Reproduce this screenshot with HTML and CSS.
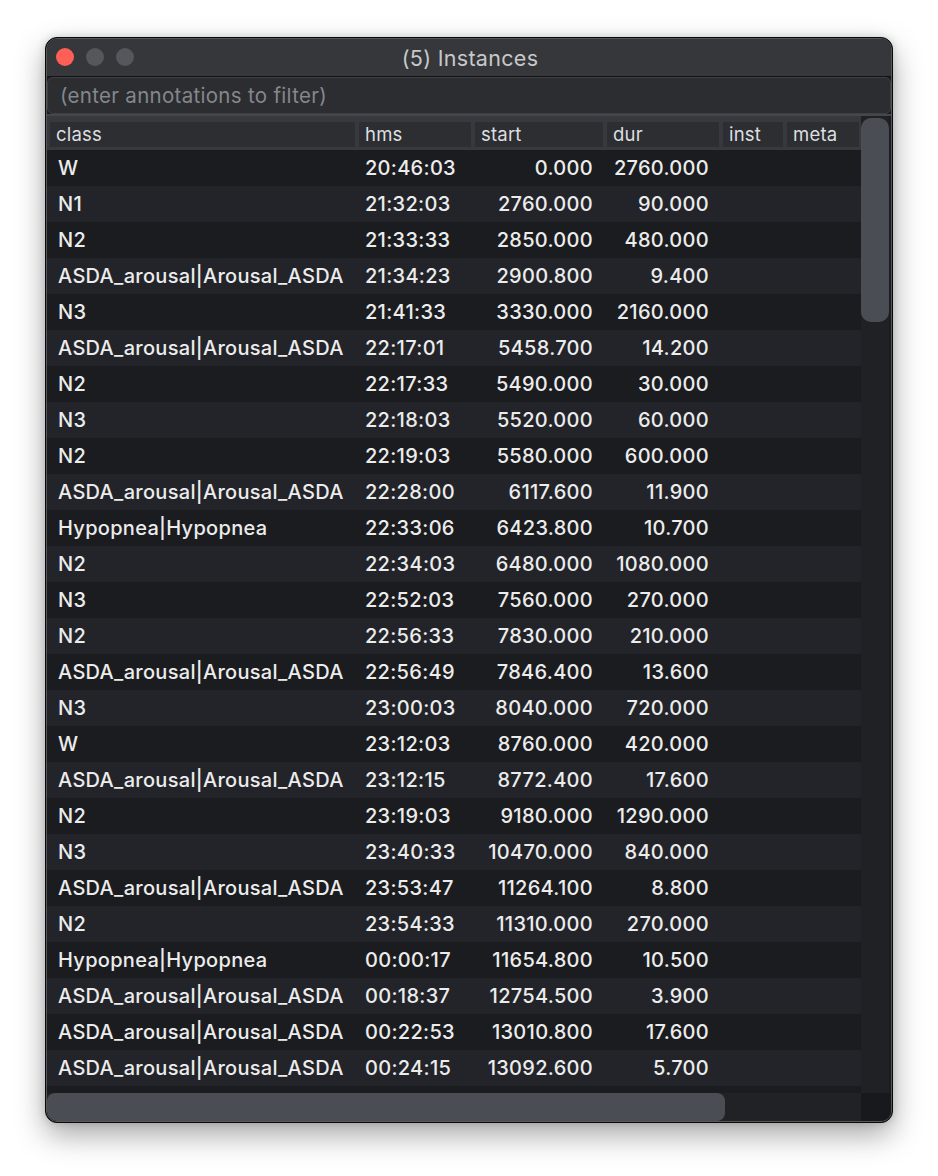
FILE: index.html
```html
<!DOCTYPE html>
<html>
<head>
<meta charset="utf-8">
<link rel="stylesheet" href="styles.css">
</head>
<body>
<div class="window">
  <div class="frame">
    <div class="titlebar">
      <div class="lights">
        <span class="light red"></span>
        <span class="light gray"></span>
        <span class="light gray"></span>
      </div>
      <div class="title">(5) Instances</div>
    </div>
    <div class="filter">(enter annotations to filter)</div>
    <div class="tablewrap">
      <div class="tablemain">
        <div class="header">
          <div class="hcell">class</div>
          <div class="hcell">hms</div>
          <div class="hcell">start</div>
          <div class="hcell">dur</div>
          <div class="hcell">inst</div>
          <div class="hcell">meta</div>
        </div>
        <div class="rows" id="rows"></div>
      </div>
      <div class="vscroll"><div class="vthumb"></div></div>
    </div>
    <div class="bottombar">
      <div class="hscroll"><div class="hthumb"></div></div>
      <div class="corner"></div>
    </div>
  </div>
</div>
<script src="app.js"></script>
</body>
</html>
```

FILE: app.js
```js
const data = [
  ["W","20:46:03","0.000","2760.000"],
  ["N1","21:32:03","2760.000","90.000"],
  ["N2","21:33:33","2850.000","480.000"],
  ["ASDA_arousal|Arousal_ASDA","21:34:23","2900.800","9.400"],
  ["N3","21:41:33","3330.000","2160.000"],
  ["ASDA_arousal|Arousal_ASDA","22:17:01","5458.700","14.200"],
  ["N2","22:17:33","5490.000","30.000"],
  ["N3","22:18:03","5520.000","60.000"],
  ["N2","22:19:03","5580.000","600.000"],
  ["ASDA_arousal|Arousal_ASDA","22:28:00","6117.600","11.900"],
  ["Hypopnea|Hypopnea","22:33:06","6423.800","10.700"],
  ["N2","22:34:03","6480.000","1080.000"],
  ["N3","22:52:03","7560.000","270.000"],
  ["N2","22:56:33","7830.000","210.000"],
  ["ASDA_arousal|Arousal_ASDA","22:56:49","7846.400","13.600"],
  ["N3","23:00:03","8040.000","720.000"],
  ["W","23:12:03","8760.000","420.000"],
  ["ASDA_arousal|Arousal_ASDA","23:12:15","8772.400","17.600"],
  ["N2","23:19:03","9180.000","1290.000"],
  ["N3","23:40:33","10470.000","840.000"],
  ["ASDA_arousal|Arousal_ASDA","23:53:47","11264.100","8.800"],
  ["N2","23:54:33","11310.000","270.000"],
  ["Hypopnea|Hypopnea","00:00:17","11654.800","10.500"],
  ["ASDA_arousal|Arousal_ASDA","00:18:37","12754.500","3.900"],
  ["ASDA_arousal|Arousal_ASDA","00:22:53","13010.800","17.600"],
  ["ASDA_arousal|Arousal_ASDA","00:24:15","13092.600","5.700"],
  ["","","",""]
];
const rows = document.getElementById("rows");
data.forEach(function (d) {
  const r = document.createElement("div");
  r.className = "row";
  const cls = ["c-class","c-hms","c-num","c-num","c-empty","c-empty"];
  const vals = [d[0], d[1], d[2], d[3], "", ""];
  vals.forEach(function (v, i) {
    const c = document.createElement("div");
    c.className = "cell " + cls[i];
    c.textContent = v;
    r.appendChild(c);
  });
  rows.appendChild(r);
});
```

FILE: styles.css
```css
html, body {
  margin: 0;
  padding: 0;
  background: #ffffff;
}
body {
  font-family: Inter, "Open Sans", "Liberation Sans", sans-serif;
  width: 938px;
  height: 1176px;
  overflow: hidden;
}
.window {
  margin: 37px 0 0 45px;
  width: 848px;
  height: 1086px;
  box-sizing: border-box;
  border: 1px solid #0a0a0b;
  border-radius: 12px;
  box-shadow: 0 12px 30px rgba(0,0,0,0.35), 0 0 8px rgba(0,0,0,0.15);
  overflow: hidden;
  background: #1c1d20;
}
.frame {
  height: 100%;
  box-sizing: border-box;
  border: 1px solid #55575b;
  border-radius: 11px;
  overflow: hidden;
  display: flex;
  flex-direction: column;
}
.titlebar {
  position: relative;
  height: 37px;
  flex: none;
  background: #35373b;
  border-bottom: 1px solid #111214;
  display: flex;
  align-items: center;
  justify-content: center;
}
.lights {
  position: absolute;
  left: 9px;
  top: 9px;
  display: flex;
  gap: 12px;
}
.light {
  width: 18px;
  height: 18px;
  border-radius: 50%;
}
.red { background: #fe5f57; }
.gray { background: #55575c; }
.title {
  color: #c8c8c9;
  font-size: 21.5px;
  letter-spacing: 0.3px;
  margin-left: 2px;
}
.filter {
  flex: none;
  height: 37px;
  box-sizing: border-box;
  background: #2b2d31;
  border: 1px solid #3e4044;
  border-radius: 6px;
  color: #85878b;
  font-size: 20.5px;
  letter-spacing: 0.3px;
  padding: 6px 0 0 12px;
  line-height: 24px;
}
.tablewrap {
  flex: 1;
  display: flex;
  min-height: 0;
  border-top: 2px solid #45474c;
}
.tablemain {
  width: 814px;
  display: flex;
  flex-direction: column;
  min-height: 0;
}
.header {
  flex: none;
  height: 34px;
  box-sizing: border-box;
  background: #37393e;
  padding: 6px 0 5px 3px;
  display: grid;
  grid-template-columns: 305px 112px 128px 112px 60px 72px;
  column-gap: 4px;
}
.hcell {
  background: #2c2e32;
  color: #dedfe0;
  font-size: 18.5px;
  letter-spacing: 0.2px;
  line-height: 25px;
  padding-left: 6px;
}
.rows {
  flex: 1;
  overflow: hidden;
}
.row {
  height: 36px;
  display: grid;
  grid-template-columns: 308px 116px 132px 116px 64px 76px;
  align-items: center;
  background: #1b1c1f;
  color: #ececec;
  font-size: 20px;
  font-weight: 500;
  letter-spacing: 0.3px;
}
.row:nth-child(even) {
  background: #222429;
}
.cell {
  white-space: nowrap;
  overflow: hidden;
}
.c-class { padding-left: 11px; }
.c-hms { padding-left: 10px; }
.c-num { text-align: right; padding-right: 10px; }
.vscroll {
  width: 28px;
  flex: none;
  background: #1f2124;
  position: relative;
}
.vthumb {
  margin: 2px 0 0 0;
  width: 28px;
  height: 204px;
  background: #4a4d53;
  border-radius: 10px;
}
.bottombar {
  flex: none;
  height: 28px;
  display: flex;
}
.hscroll {
  width: 814px;
  background: #202226;
}
.hthumb {
  width: 678px;
  height: 28px;
  background: #4a4d53;
  border-radius: 8px;
}
.corner {
  flex: 1;
  background: #18191c;
}
```
